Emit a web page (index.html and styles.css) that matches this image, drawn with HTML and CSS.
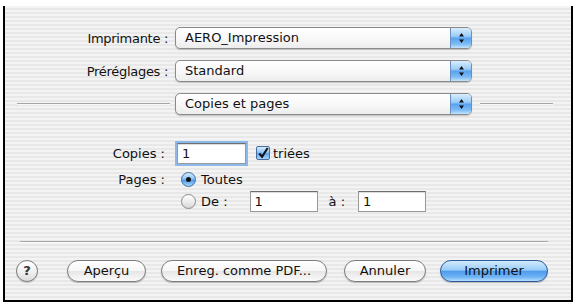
FILE: index.html
```html
<!doctype html>
<html>
  <head>
    <title>Imprimer</title>
    <meta charset="utf-8">
    <link rel="stylesheet" href="styles.css">
  </head>
  <body>
    <div class="window">
      <div class="top">
        <div class="row">
          <span class="label">Imprimante :</span>
          <div class="popup">
            <span class="popup-text">AERO_Impression</span>
            <span class="popup-arrows"><svg width="7" height="12" viewBox="0 0 7 12"><path d="M3.5 1L6 4.5H1z M1 7.5h5L3.5 11z" fill="#111"/></svg></span>
          </div>
        </div>
        <div class="row">
          <span class="label">Préréglages :</span>
          <div class="popup">
            <span class="popup-text">Standard</span>
            <span class="popup-arrows"><svg width="7" height="12" viewBox="0 0 7 12"><path d="M3.5 1L6 4.5H1z M1 7.5h5L3.5 11z" fill="#111"/></svg></span>
          </div>
        </div>
        <div class="row">
          <span class="rule rule-left"></span>
          <div class="popup">
            <span class="popup-text">Copies et pages</span>
            <span class="popup-arrows"><svg width="7" height="12" viewBox="0 0 7 12"><path d="M3.5 1L6 4.5H1z M1 7.5h5L3.5 11z" fill="#111"/></svg></span>
          </div>
          <span class="rule rule-right"></span>
        </div>
      </div>

      <div class="pane">
        <div class="pane-row copies">
          <span class="pane-label">Copies :</span>
          <span class="field focus">1</span>
          <span class="checkbox"><svg width="13" height="13" viewBox="0 0 13 13"><path d="M2.5 6.5l3 3.5L11.5 0.5" fill="none" stroke="#111" stroke-width="2.2"/></svg></span>
          <span>triées</span>
        </div>
        <div class="pane-row pages">
          <span class="pane-label">Pages :</span>
          <span class="radio on"><span class="dot"></span></span>
          <span>Toutes</span>
        </div>
        <div class="pane-row range">
          <span class="pane-label"></span>
          <span class="radio"></span>
          <span class="range-de">De :</span>
          <span class="field">1</span>
          <span class="range-a">à :</span>
          <span class="field">1</span>
        </div>
      </div>

      <div class="divider"></div>

      <div class="buttons">
        <span class="help">?</span>
        <span class="btn btn-apercu">Aperçu</span>
        <span class="btn btn-pdf">Enreg. comme PDF...</span>
        <span class="btn btn-annuler">Annuler</span>
        <span class="btn btn-default">Imprimer</span>
      </div>
    </div>
  </body>
</html>
```

FILE: styles.css
```css
body {
  margin: 0px;
  background: white;
  font-family: "DejaVu Sans", sans-serif;
  font-size: 13px;
  color: #111;
}
.window {
  margin: 6px 0px 0px 3px;
  width: 566px;
  height: 294px;
  border: solid #000;
  border-width: 0px 2px 2px 2px;
  background: repeating-linear-gradient(to bottom, #f3f3f3 0px, #f3f3f3 2px, #e8e8e8 2px, #e8e8e8 4px);
}
.top {
  padding-top: 21px;
}
.row {
  display: flex;
  align-items: center;
  height: 22px;
  margin-bottom: 11px;
}
.label {
  width: 163px;
  text-align: right;
  margin-right: 7px;
  letter-spacing: -0.3px;
}
.popup {
  display: flex;
  align-items: stretch;
  width: 295px;
  height: 20px;
  border: 1px solid #8a8a8a;
  border-radius: 5px;
  background: linear-gradient(to bottom, #ffffff 0%, #f7f7f7 60%, #ececec 100%);
  box-shadow: 0px 1px 1px rgba(0,0,0,0.2);
  overflow: hidden;
}
.popup-text {
  flex: 1;
  padding-left: 9px;
  line-height: 20px;
}
.popup-arrows {
  width: 20px;
  display: flex;
  align-items: center;
  justify-content: center;
  border-left: 1px solid #6a8fc0;
  background: linear-gradient(to bottom, #d8edfd 0%, #9ccdf7 40%, #5aa3ee 52%, #7cbcf5 80%, #c2e4fd 100%);
}
.rule {
  height: 1px;
  background: #a6a6a6;
  border-bottom: 1px solid #fafafa;
}
.rule-left {
  width: 153px;
  margin-left: 12px;
  margin-right: 5px;
}
.rule-right {
  width: 73px;
  margin-left: 8px;
}
.pane {
  padding-top: 16px;
}
.pane-row {
  display: flex;
  align-items: center;
}
.pane-label {
  width: 160px;
  text-align: right;
  margin-right: 12px;
}
.copies {
  height: 22px;
}
.pages {
  height: 18px;
  margin-top: 6px;
}
.range {
  height: 22px;
  margin-top: 2px;
}
.field {
  display: inline-block;
  width: 62px;
  height: 19px;
  line-height: 20px;
  padding-left: 4px;
  background: white;
  border: 1px solid #9a9a9a;
  border-top-color: #6e6e6e;
  box-shadow: inset 0px 1px 1px rgba(0,0,0,0.15);
}
.field.focus {
  width: 63px;
  height: 19px;
  box-shadow: 0px 0px 0px 2px #8db8ea, inset 0px 1px 1px rgba(0,0,0,0.15);
}
.checkbox {
  display: inline-flex;
  width: 12px;
  height: 12px;
  margin-left: 10px;
  margin-right: 3px;
  border: 1px solid #4a6f9f;
  border-radius: 2px;
  background: linear-gradient(to bottom, #d5ebfd 0%, #8cc4f5 45%, #5ba3ec 55%, #a6d5fb 100%);
  overflow: visible;
}
.radio {
  display: inline-flex;
  align-items: center;
  justify-content: center;
  width: 13px;
  height: 13px;
  margin-left: 4px;
  margin-right: 5px;
  border: 1px solid #8a8a8a;
  border-radius: 50%;
  background: linear-gradient(to bottom, #ffffff 0%, #ededed 50%, #d6d6d6 100%);
}
.radio.on {
  border-color: #3f6ca6;
  background: linear-gradient(to bottom, #d5ebfd 0%, #8cc4f5 45%, #4f9bea 55%, #a6d5fb 100%);
}
.dot {
  width: 5px;
  height: 5px;
  border-radius: 50%;
  background: #111;
}
.range-de {
  margin-right: 22px;
}
.range-a {
  margin-left: 11px;
  margin-right: 13px;
}
.divider {
  margin: 29px 0px 0px 15px;
  width: 528px;
  height: 1px;
  background: #a6a6a6;
  border-bottom: 1px solid #fafafa;
}
.buttons {
  display: flex;
  align-items: center;
  margin-top: 17px;
  padding-left: 11px;
}
.help {
  width: 20px;
  height: 20px;
  border: 1px solid #7a7a7a;
  border-radius: 50%;
  background: linear-gradient(to bottom, #ffffff 0%, #f2f2f2 50%, #dcdcdc 100%);
  text-align: center;
  line-height: 20px;
  font-weight: bold;
  font-size: 13px;
  color: #333;
  box-shadow: 0px 1px 1px rgba(0,0,0,0.2);
}
.btn {
  display: inline-block;
  height: 20px;
  line-height: 20px;
  text-align: center;
  border: 1px solid #7c7c7c;
  border-radius: 11px;
  background: linear-gradient(to bottom, #ffffff 0%, #f6f6f6 50%, #e6e6e6 52%, #fafafa 100%);
  box-shadow: 0px 1px 1px rgba(0,0,0,0.25);
}
.btn-apercu {
  width: 77px;
  margin-left: 29px;
}
.btn-pdf {
  width: 164px;
  margin-left: 15px;
}
.btn-annuler {
  width: 80px;
  margin-left: 17px;
}
.btn-default {
  width: 106px;
  margin-left: 14px;
  border-color: #2d5a9a;
  background: linear-gradient(to bottom, #d3eafd 0%, #98ccf8 45%, #4f9cee 52%, #6fb4f4 80%, #b6defd 100%);
}
```
